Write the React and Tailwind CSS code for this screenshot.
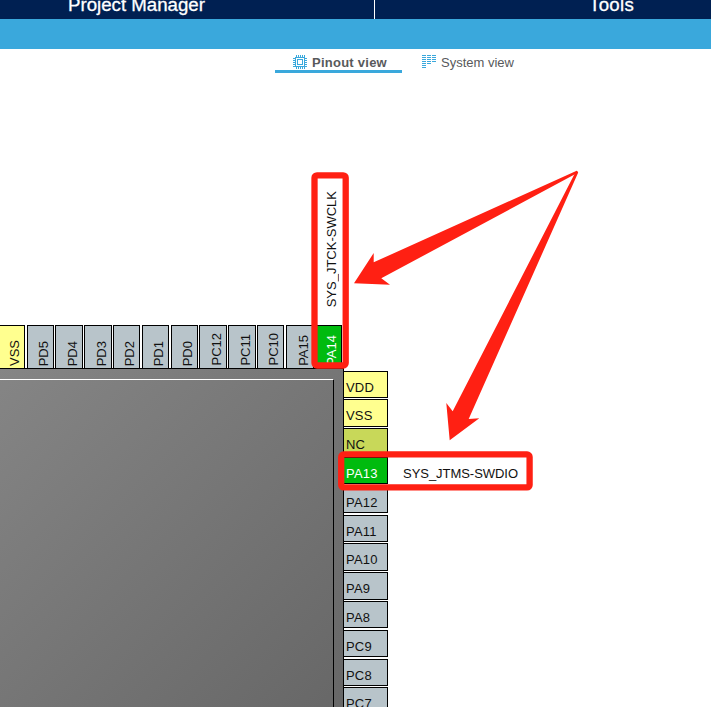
const TOP_PINS = [
  { name: "VSS", cls: "w-[25px] bg-[#ffff8f]" },
  { name: "PD5", cls: "ml-[2px] w-[27px] border-l bg-[#b8c4ca]" },
  { name: "PD4", cls: "ml-px w-[28px] border-l bg-[#b8c4ca]" },
  { name: "PD3", cls: "ml-px w-[28px] border-l bg-[#b8c4ca]" },
  { name: "PD2", cls: "ml-px w-[27px] border-l bg-[#b8c4ca]" },
  { name: "PD1", cls: "ml-[2px] w-[27px] border-l bg-[#b8c4ca]" },
  { name: "PD0", cls: "ml-[2px] w-[27px] border-l bg-[#b8c4ca]" },
  { name: "PC12", cls: "ml-px w-[28px] border-l bg-[#b8c4ca]" },
  { name: "PC11", cls: "ml-px w-[28px] border-l bg-[#b8c4ca]" },
  { name: "PC10", cls: "ml-px w-[27px] border-l bg-[#b8c4ca]" },
  { name: "PA15", cls: "ml-[2px] w-[28px] border-l bg-[#b8c4ca]" },
  { name: "PA14", cls: "ml-px w-[27px] border-l bg-[#00bb0f] text-white" },
];

const RIGHT_PINS = [
  { name: "VDD", cls: "h-[27px] bg-[#ffff8f]" },
  { name: "VSS", cls: "mt-px h-[28px] bg-[#ffff8f]" },
  { name: "NC", cls: "mt-px h-[28px] bg-[#c8d859]" },
  { name: "PA13", cls: "mt-px h-[27px] bg-[#00bb0f] text-white" },
  { name: "PA12", cls: "mt-[2px] h-[27px] bg-[#b8c4ca]" },
  { name: "PA11", cls: "mt-[2px] h-[27px] bg-[#b8c4ca]" },
  { name: "PA10", cls: "mt-px h-[28px] bg-[#b8c4ca]" },
  { name: "PA9", cls: "mt-px h-[28px] bg-[#b8c4ca]" },
  { name: "PA8", cls: "mt-px h-[27px] bg-[#b8c4ca]" },
  { name: "PC9", cls: "mt-[2px] h-[27px] bg-[#b8c4ca]" },
  { name: "PC8", cls: "mt-[2px] h-[27px] bg-[#b8c4ca]" },
  { name: "PC7", cls: "mt-px h-[28px] bg-[#b8c4ca]" },
];

function ChipIcon() {
  return (
    <svg width="14" height="14" viewBox="0 0 14 14" fill="none" stroke="#3aa8dc" shapeRendering="crispEdges">
      <rect x="2.5" y="2.5" width="9" height="9" />
      <rect x="4.5" y="4.5" width="5" height="5" />
      {[3.5, 5.5, 7.5, 9.5, 11.5].map((p) => (
        <path key={p} d={`M${p} 0V2M${p} 12V14M0 ${p}H2M12 ${p}H14`} />
      ))}
    </svg>
  );
}

function ListIcon() {
  return (
    <svg width="14" height="14" viewBox="0 0 14 14" stroke="#3aa8dc" shapeRendering="crispEdges">
      <path d="M0 .5H4M0 2.5H4M0 4.5H4M0 6.5H4M0 8.5H4M0 10.5H4M0 12.5H4" />
      <path d="M5 .5H9M5 2.5H9M5 4.5H9M5 6.5H9M5 8.5H9" />
      <path d="M10 .5H14M10 2.5H14M10 4.5H14M10 6.5H14" />
    </svg>
  );
}

export default function App() {
  return (
    <div className="relative flex h-[707px] w-[711px] flex-col overflow-hidden bg-white font-['Liberation_Sans',Arial,sans-serif] text-[13px] text-black">
      <header className="flex h-[19px] shrink-0 overflow-hidden bg-[#002052] text-[18.67px] leading-[22px] text-white [-webkit-text-stroke:0.3px_white]">
        <div className="-mt-[6px] h-[25px] w-[375px] shrink-0 border-r border-white pl-[68px]">Project Manager</div>
        <div className="-mt-[6px] pl-[214px] tracking-[0.3px]">Tools</div>
      </header>
      <div className="h-[30px] shrink-0 bg-[#3aa8dc]" />

      <nav className="flex h-[24px] shrink-0 pl-[275px] leading-[15px] text-[#58595b]">
        <div className="flex w-[127px] gap-[5px] border-b-[3px] border-[#3aa8dc] pl-[18px] pt-[6px] font-bold">
          <ChipIcon />
          <span className="tracking-[0.25px]">Pinout view</span>
        </div>
        <div className="flex gap-[5px] pl-[20px] pt-[6px]">
          <ListIcon />
          <span>System view</span>
        </div>
      </nav>

      <main className="flex flex-col pt-[252px] text-[#111]">
        <div className="flex h-[43px] shrink-0">
          {TOP_PINS.map((pin) => (
            <div
              key={pin.name}
              className={`flex shrink-0 items-end justify-end border-r border-t border-black pb-[2px] pr-[2px] ${pin.cls}`}
            >
              <span className="rotate-180 leading-[15px] [writing-mode:vertical-rl]">{pin.name}</span>
            </div>
          ))}
        </div>
        <div className="flex h-[339px]">
          <div className="w-[344px] shrink-0 border-r border-t border-black bg-linear-to-br from-[#858585] to-[#676767] pr-[9px] pt-[10px]">
            <div className="h-full border-r border-t border-r-black border-t-white" />
          </div>
          <div className="flex flex-col pt-[3px]">
            {RIGHT_PINS.map((pin) => (
              <div key={pin.name} className="flex shrink-0 items-center">
                <div
                  className={`w-[44px] shrink-0 border-y border-r border-black pl-[2px] pt-[8px] leading-[15px] tracking-[0.2px] ${pin.cls}`}
                >
                  {pin.name}
                </div>
                {pin.name === "PA13" && (
                  <span className="h-0 pl-[15px] leading-[8px] tracking-[-0.04px]">SYS_JTMS-SWDIO</span>
                )}
              </div>
            ))}
          </div>
        </div>
      </main>

      <span className="absolute left-[324px] top-[191px] rotate-180 leading-[15px] text-[#111] [writing-mode:vertical-rl]">
        SYS_JTCK-SWCLK
      </span>

      <svg className="absolute left-0 top-0" width="711" height="707" viewBox="0 0 711 707">
        <g fill="none" stroke="#ff2013" strokeWidth="6.3">
          <rect x="314.5" y="175.3" width="31.2" height="190.2" rx="2.5" />
          <rect x="341.2" y="454.4" width="188.4" height="33" rx="2.5" />
        </g>
        <g fill="#ff2013">
          <path d="M354 283.3L373.7 253V262.3L576.7 170.8L578.2 172.5L381.3 278.3L390 284.7Z" />
          <path d="M449.7 440.3L446.3 403L452.7 411.3L575.3 172.5L576.7 170.8L578.2 172.5L468.7 419L479.3 418.3Z" />
        </g>
      </svg>
    </div>
  );
}
